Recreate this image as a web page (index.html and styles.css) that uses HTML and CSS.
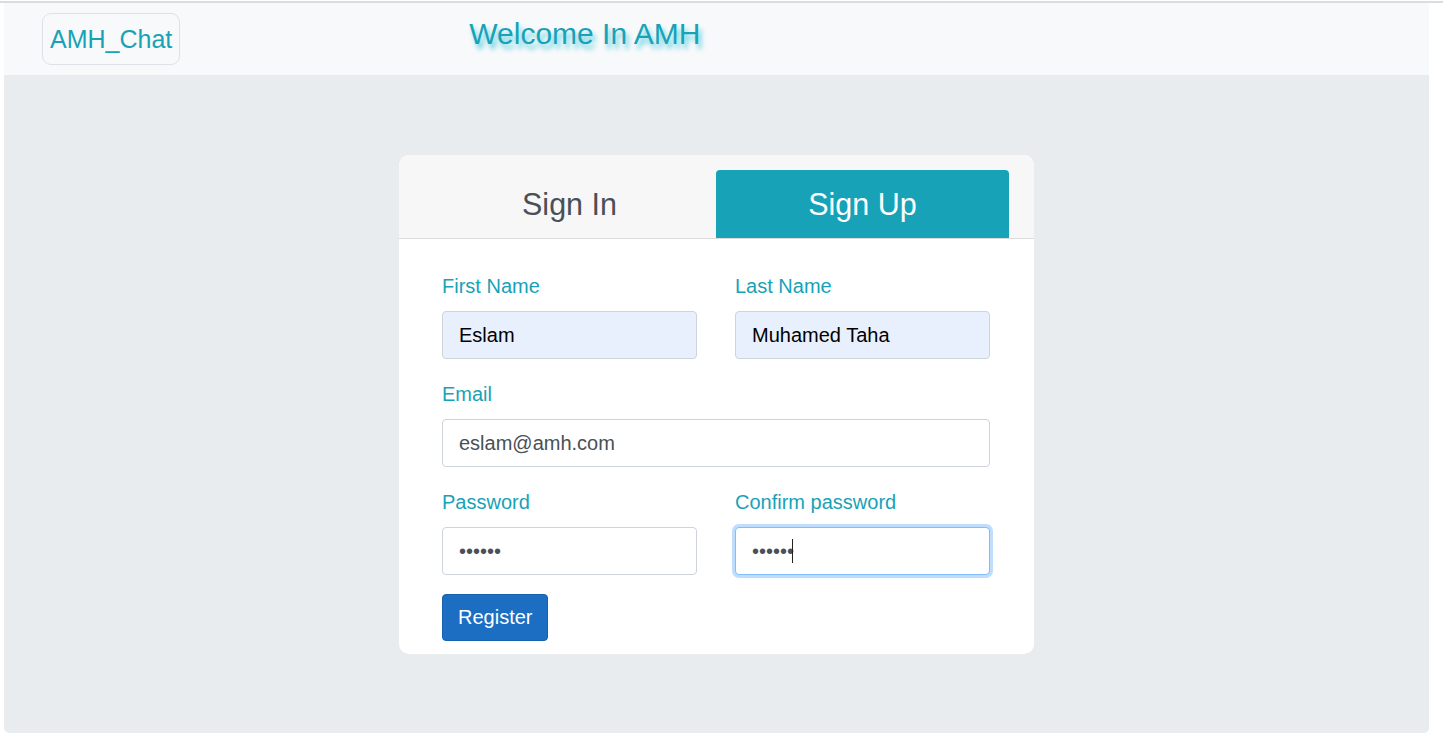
FILE: index.html
```html
<!DOCTYPE html>
<html lang="en">
<head>
<meta charset="utf-8">
<title>AMH_Chat</title>
<link rel="stylesheet" href="styles.css">
</head>
<body>
<div class="topline"></div>
<div class="page">
  <header class="header">
    <a class="brand" href="#">AMH_Chat</a>
    <h1 class="welcome">Welcome In AMH</h1>
  </header>
  <main class="main">
    <div class="card">
      <div class="card-header">
        <div class="tab">Sign In</div>
        <div class="tab active">Sign Up</div>
      </div>
      <form class="card-body">
        <div class="row">
          <div class="group">
            <label class="label">First Name</label>
            <input class="control autofill" type="text" value="Eslam">
          </div>
          <div class="group">
            <label class="label">Last Name</label>
            <input class="control autofill" type="text" value="Muhamed Taha">
          </div>
        </div>
        <div class="group">
          <label class="label">Email</label>
          <input class="control" type="text" value="eslam@amh.com">
        </div>
        <div class="row">
          <div class="group">
            <label class="label">Password</label>
            <input class="control" type="password" value="123456">
          </div>
          <div class="group">
            <label class="label">Confirm password</label>
            <div class="caret-wrap">
              <input class="control focus" type="password" value="123456">
              <span class="caret"></span>
            </div>
          </div>
        </div>
        <button class="btn" type="button">Register</button>
      </form>
    </div>
  </main>
</div>
</body>
</html>
```
FILE: styles.css
```css
* { box-sizing: border-box; }
html, body { margin: 0; padding: 0; background: #fff; }
body {
  font-family: "Liberation Sans", Arial, sans-serif;
  color: #212529;
}
.topline {
  height: 3px;
  border-top: 1px solid #fff;
  background: #dadce0;
}
.page {
  margin-left: 4px;
  width: 1425px;
}
.header {
  height: 72px;
  background: #f8f9fa;
  display: flex;
  align-items: flex-start;
  padding-left: 38px;
}
.brand {
  margin-top: 10px;
  display: block;
  height: 52px;
  padding: 6px 7px;
  border: 1px solid #dee2e6;
  border-radius: 9px;
  font-size: 25px;
  line-height: 38px;
  color: #17a2b8;
  text-decoration: none;
}
.welcome {
  margin: 12px 0 0 289px;
  font-size: 30px;
  font-weight: normal;
  line-height: 38px;
  color: #17a2b8;
  text-shadow: 3px 5px 5px #5fd0e3;
}
.main {
  background: #e9ecef;
  height: 658px;
  border-radius: 0 0 5px 5px;
  padding-top: 80px;
  display: flex;
  justify-content: center;
  align-items: flex-start;
}
.card {
  width: 635px;
  background: #fff;
  border-radius: 10px;
  overflow: hidden;
}
.card-header {
  background: #f7f7f7;
  border-bottom: 1px solid #dcdcdc;
  padding: 15px 25px 0 24px;
  display: grid;
  grid-template-columns: 1fr 1fr;
}
.tab {
  height: 68px;
  display: flex;
  align-items: center;
  justify-content: center;
  font-size: 30.5px;
  color: #495057;
  border-radius: 4px 4px 0 0;
}
.tab.active {
  background: #17a2b8;
  color: #fff;
}
.card-body {
  margin: 0;
  padding: 32px 44px 13px 43px;
}
.row {
  display: grid;
  grid-template-columns: 1fr 1fr;
  column-gap: 38px;
}
.group {
  margin-bottom: 20px;
}
.label {
  display: block;
  font-size: 20px;
  line-height: 30px;
  color: #17a2b8;
  margin-bottom: 10px;
}
.control {
  display: block;
  width: 100%;
  height: 48px;
  padding: 8px 16px;
  font-family: "Liberation Sans", Arial, sans-serif;
  font-size: 20px;
  line-height: 30px;
  color: #495057;
  background: #fff;
  border: 1px solid #ced4da;
  border-radius: 4px;
  outline: none;
}
.control.autofill {
  background: #e8f0fe;
  color: #000;
}
.control.focus {
  border-color: #80bdff;
  box-shadow: 0 0 0 3px rgba(0, 123, 255, 0.25);
}
.caret-wrap { position: relative; }
.caret {
  position: absolute;
  left: 57px;
  top: 12px;
  width: 1px;
  height: 24px;
  background: #222;
}
.btn {
  display: block;
  height: 47px;
  padding: 0 15px;
  margin-top: -1px;
  font-family: "Liberation Sans", Arial, sans-serif;
  font-size: 20px;
  color: #fff;
  background: #1b6ec2;
  border: 1px solid #1861ac;
  border-radius: 4px;
}
```
